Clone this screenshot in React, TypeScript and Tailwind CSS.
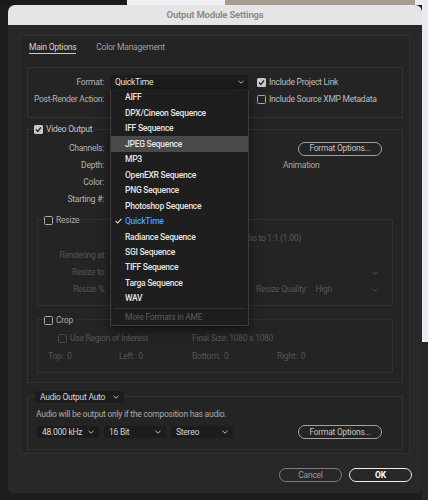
import React from 'react'

const FONT = { fontFamily: 'Roboto, "Liberation Sans", sans-serif' }

const FORMATS = [
  'AIFF', 'DPX/Cineon Sequence', 'IFF Sequence', 'JPEG Sequence', 'MP3', 'OpenEXR Sequence',
  'PNG Sequence', 'Photoshop Sequence', 'QuickTime', 'Radiance Sequence', 'SGI Sequence',
  'TIFF Sequence', 'Targa Sequence', 'WAV',
]

function Chevron({ dim }: { dim?: boolean }) {
  return (
    <svg width="6" height="4" viewBox="0 0 6 4" className="shrink-0">
      <polyline points="0.5,0.8 3,3.2 5.5,0.8" fill="none" stroke={dim ? '#4f4f4f' : '#b9b9b9'} strokeWidth="1" />
    </svg>
  )
}

function Check({ on, dim }: { on?: boolean; dim?: boolean }) {
  if (on) {
    return (
      <span className="flex h-[9px] w-[9px] shrink-0 items-center justify-center rounded-[1.5px] bg-[#c9c9c9]">
        <svg width="7" height="7" viewBox="0 0 7 7">
          <polyline points="1,3.6 2.8,5.4 6,1.4" fill="none" stroke="#262626" strokeWidth="1.4" />
        </svg>
      </span>
    )
  }
  return <span className={`h-[9px] w-[9px] shrink-0 rounded-[1.5px] border ${dim ? 'border-[#4a4a4a]' : 'border-[#a9a9a9]'}`} />
}

function Label({ children, dim }: { children: React.ReactNode; dim?: boolean }) {
  return <span className={`w-[77px] shrink-0 pr-[1px] text-right ${dim ? 'text-[#555]' : 'text-[#b3b3b3]'}`}>{children}</span>
}

function Pill({ children, w, strong, muted }: { children: React.ReactNode; w: string; strong?: boolean; muted?: boolean }) {
  return (
    <button
      className={`flex h-[14px] ${w} items-center justify-center rounded-full ${
        strong ? 'border-[1.5px] border-[#ececec] font-bold text-white' : muted ? 'border border-[#7d7d7d] text-[#9a9a9a]' : 'border border-[#a3a3a3] text-[#c2c2c2]'
      }`}
    >
      {children}
    </button>
  )
}

function Select({ text, w }: { text: string; w: string }) {
  return (
    <div className={`flex h-[12px] ${w} items-center justify-between bg-[#1c1c1c] pl-[5px] pr-[5px] text-[#d4d4d4]`}>
      <span>{text}</span>
      <Chevron />
    </div>
  )
}

function FormatMenu() {
  return (
    <div className="absolute left-[110px] top-[90px] w-[139px] border border-t-0 border-[#3b3b3b] bg-[#1e1e1e] pb-[1px] font-medium text-[#e4e4e4] shadow-[0_4px_10px_rgba(0,0,0,0.5)]">
      {FORMATS.map((f) => (
        <div key={f} className={`flex h-[15.46px] items-center ${f === 'JPEG Sequence' ? 'bg-[#4a4a4a]' : ''}`}>
          <span className="flex w-[14px] justify-end pr-[3px]">
            {f === 'QuickTime' && (
              <svg width="7" height="6" viewBox="0 0 7 6">
                <polyline points="0.6,3.2 2.6,5 6.4,0.8" fill="none" stroke="#e0e0e0" strokeWidth="1.1" />
              </svg>
            )}
          </span>
          <span className={f === 'QuickTime' ? 'text-[#4c9dff]' : ''}>{f}</span>
        </div>
      ))}
      <div className="mx-[3px] mt-[2px] h-px bg-[#333]" />
      <div className="flex h-[15px] items-center pl-[14px] font-normal text-[#5a5a5a]">More Formats in AME</div>
    </div>
  )
}

export default function App() {
  return (
    <div className="relative flex h-[500px] w-[428px] flex-col overflow-hidden bg-[#1d1d1d] text-[8.5px] leading-none tracking-[-0.25px]" style={FONT}>
      {/* background behind the dialog */}
      <div className="flex h-[5px] shrink-0">
        <div className="w-[127px] bg-[#1a1a1a]" />
        <div className="w-[98px] bg-[#eef1f6]" />
        <div className="w-[190px] bg-[#a69d8f]" />
        <div className="flex-1 bg-[#e9edf3]" />
      </div>
      <div className="flex flex-1">
        <div className="w-[8px] bg-[#1d1d1d]" />

        {/* dialog */}
        <div className="flex h-[488px] w-[414px] flex-col overflow-hidden rounded-t-[7px] rounded-b-[5px] bg-[#282828]">
          <div className="flex h-[20px] shrink-0 items-center justify-center bg-[#e5e5e5] text-[9.5px] font-bold tracking-[-0.2px] text-[#8d8d8d]">
            Output Module Settings
          </div>

          {/* main panel */}
          <div className="ml-[12px] mt-[10px] flex h-[419px] w-[390px] flex-col border border-[#303030] bg-[#242424]">
            <div className="flex h-[18px] items-end gap-[20px] pl-[8px]">
              <span className="border-b border-[#c8c8c8] pb-[2px] text-[#d2d2d2]">Main Options</span>
              <span className="pb-[3px] text-[#9e9e9e]">Color Management</span>
            </div>

            {/* format group */}
            <div className="ml-[6px] mt-[13px] flex h-[51px] w-[376px] flex-col gap-[3px] border border-[#333] pt-[7px]">
              <div className="flex h-[14px] items-center">
                <Label>Format:</Label>
                <div className="ml-[5px] flex h-[14px] w-[138px] items-center justify-between bg-[#1b1b1b] pl-[5px] pr-[4px] text-[#e2e2e2]">
                  <span>QuickTime</span>
                  <Chevron />
                </div>
                <div className="ml-[9px] flex items-center gap-[3px] text-[#bdbdbd]">
                  <Check on />
                  <span>Include Project Link</span>
                </div>
              </div>
              <div className="flex h-[14px] items-center">
                <Label>Post-Render Action:</Label>
                <div className="ml-[152px] flex items-center gap-[3px] text-[#bdbdbd]">
                  <Check />
                  <span>Include Source XMP Metadata</span>
                </div>
              </div>
            </div>

            {/* video output group */}
            <div className="ml-[6px] mt-[11px] flex h-[254px] w-[376px] flex-col border border-[#333]">
              <div className="-mt-[6px] ml-[6px] flex h-[11px] w-fit items-center gap-[3px] bg-[#242424] pr-[2px] text-[#c4c4c4]">
                <Check on />
                <span>Video Output</span>
              </div>
              <div className="mt-[5px] flex flex-col">
                <div className="flex h-[17px] items-center">
                  <Label>Channels:</Label>
                  <div className="ml-auto mr-[20px]">
                    <Pill w="w-[84px]">Format Options...</Pill>
                  </div>
                </div>
                <div className="flex h-[17px] items-center">
                  <Label>Depth:</Label>
                  <span className="ml-[178px] text-[#a6a6a6]">Animation</span>
                </div>
                <div className="flex h-[17px] items-center">
                  <Label>Color:</Label>
                </div>
                <div className="flex h-[17px] items-center">
                  <Label>Starting #:</Label>
                </div>
              </div>

              {/* resize */}
              <div className="ml-[9px] mt-[11px] flex h-[87px] w-[356px] flex-col border border-[#303030]">
                <div className="-mt-[5px] ml-[6px] flex h-[10px] w-fit items-center gap-[3px] bg-[#242424] pr-[2px] text-[#a9a9a9]">
                  <Check />
                  <span>Resize</span>
                </div>
                <div className="mt-[5px] flex h-[17px] items-center">
                  <span className="w-[263px] text-right text-[#5a5a5a]">Lock Aspect Ratio to 1:1 (1.00)</span>
                </div>
                <div className="flex h-[17px] items-center text-[#555]">
                  <span className="w-[68px] text-right">Rendering at:</span>
                </div>
                <div className="flex h-[17px] items-center text-[#555]">
                  <span className="w-[68px] text-right">Resize to:</span>
                  <div className="ml-auto mr-[14px]"><Chevron dim /></div>
                </div>
                <div className="flex h-[17px] items-center text-[#555]">
                  <span className="w-[68px] text-right">Resize %:</span>
                  <span className="ml-[150px]">Resize Quality:</span>
                  <span className="ml-[8px]">High</span>
                  <div className="ml-auto mr-[14px]"><Chevron dim /></div>
                </div>
              </div>

              {/* crop */}
              <div className="ml-[9px] mt-[13px] flex h-[54px] w-[356px] flex-col border border-[#303030] text-[#555]">
                <div className="-mt-[5px] ml-[6px] flex h-[10px] w-fit items-center gap-[3px] bg-[#242424] pr-[2px] text-[#a9a9a9]">
                  <Check />
                  <span>Crop</span>
                </div>
                <div className="mt-[4px] flex h-[18px] items-center pl-[20px]">
                  <div className="flex w-[134px] items-center gap-[3px]">
                    <Check dim />
                    <span>Use Region of Interest</span>
                  </div>
                  <span>Final Size: 1080 x 1080</span>
                </div>
                <div className="flex h-[18px] items-center pl-[10px]">
                  <span className="w-[71px]">Top:&nbsp;&nbsp;0</span>
                  <span className="w-[73px]">Left:&nbsp;&nbsp;0</span>
                  <span className="w-[85px]">Bottom:&nbsp;&nbsp;0</span>
                  <span>Right:&nbsp;&nbsp;0</span>
                </div>
              </div>
            </div>

            {/* audio */}
            <div className="ml-[6px] mt-[13px] flex h-[54px] w-[376px] flex-col border border-[#333]">
              <div className="-mt-[6px] ml-[7px]">
                <Select text="Audio Output Auto" w="w-[89px]" />
              </div>
              <div className="ml-[8px] mt-[6px] flex h-[11px] items-center text-[#a8a8a8]">
                Audio will be output only if the composition has audio.
              </div>
              <div className="ml-[9px] mt-[5px] flex h-[14px] items-center gap-[5px]">
                <Select text="48.000 kHz" w="w-[62px]" />
                <Select text="16 Bit" w="w-[62px]" />
                <Select text="Stereo" w="w-[62px]" />
                <div className="ml-auto mr-[20px]">
                  <Pill w="w-[84px]">Format Options...</Pill>
                </div>
              </div>
            </div>
          </div>

          <div className="mr-[10px] mt-[14px] flex justify-end gap-[7px]">
            <Pill w="w-[63px]" muted>Cancel</Pill>
            <Pill w="w-[63px]" strong>OK</Pill>
          </div>
        </div>

        <div className="flex flex-1 flex-col">
          <div className="h-[337px] bg-[#e8edf4]" />
          <div className="flex-1 bg-[#262626]" />
        </div>
      </div>

      <FormatMenu />
    </div>
  )
}
